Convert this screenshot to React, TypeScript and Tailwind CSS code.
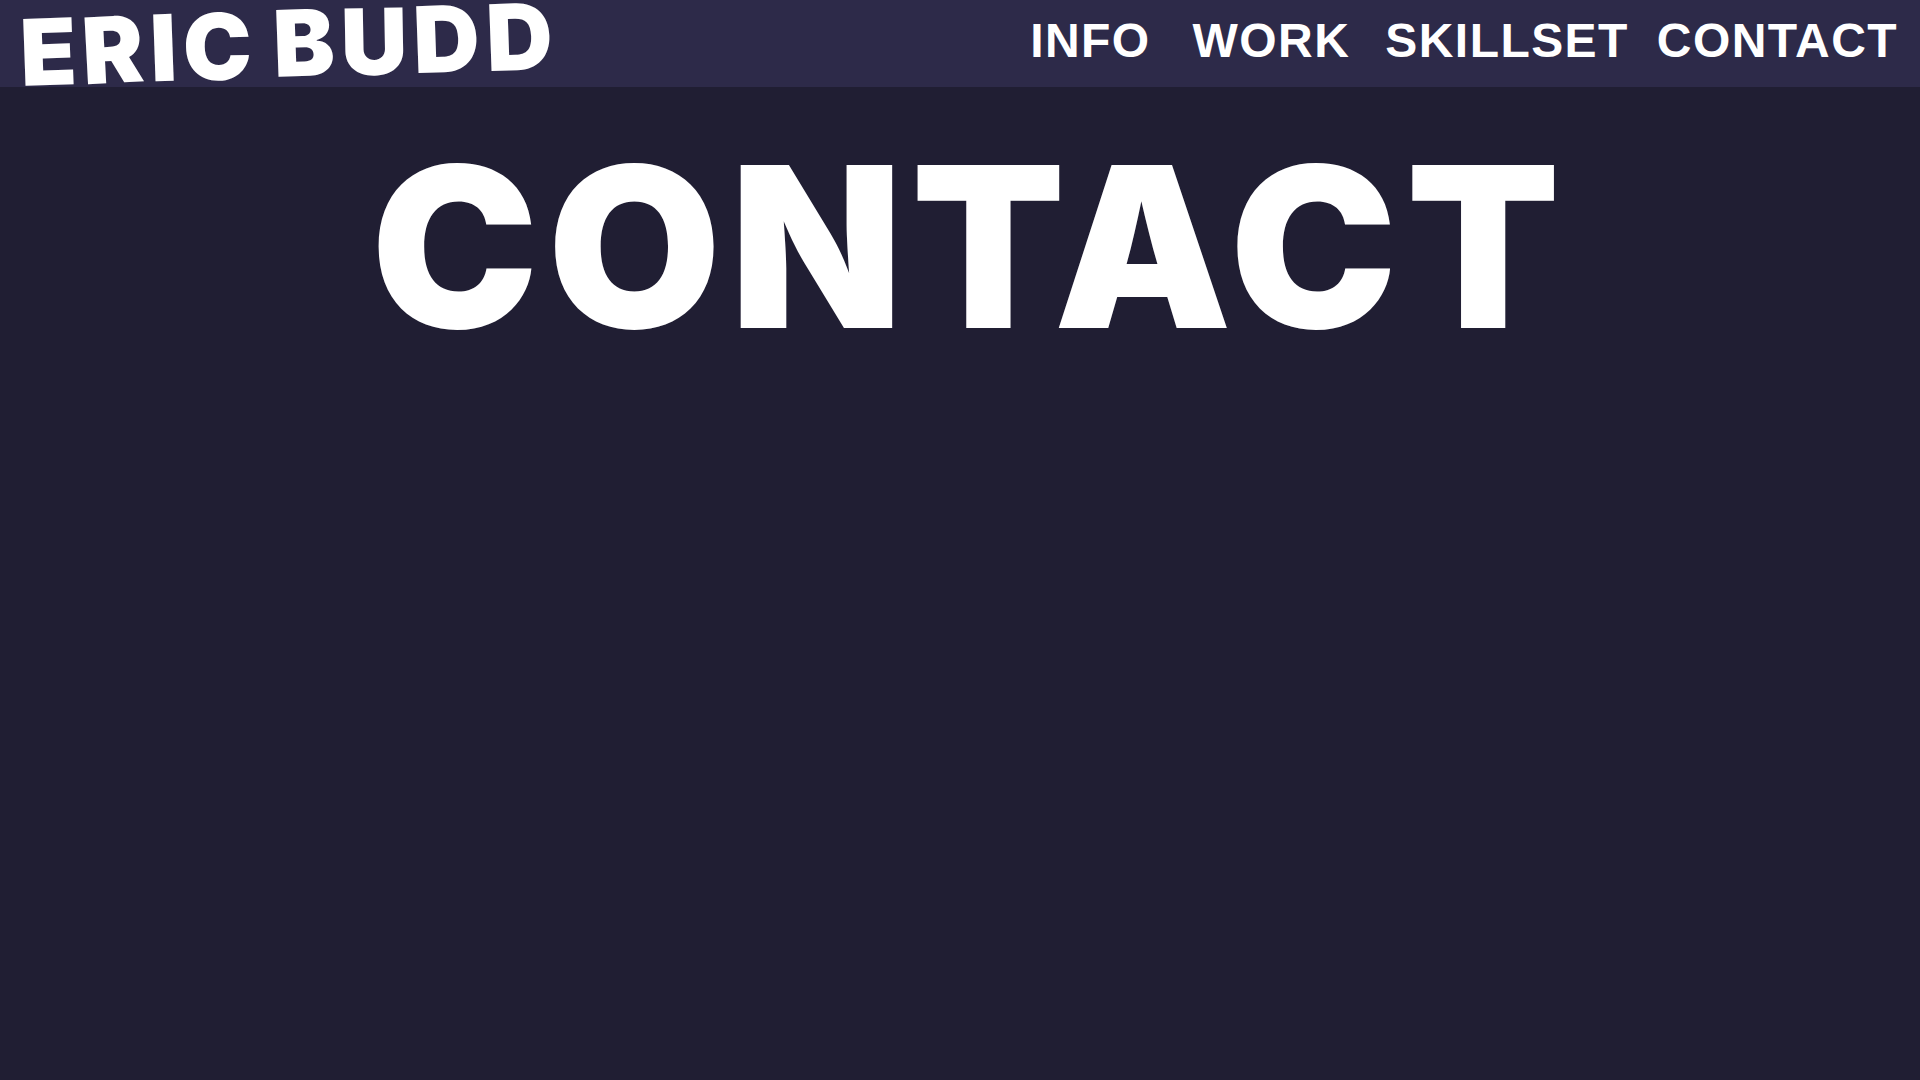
import React from 'react';

const logo = [
  { ch: 'E', cls: 'translate-y-[8px] -rotate-2' },
  { ch: 'R', cls: 'translate-y-[6px] -rotate-3' },
  { ch: 'I', cls: 'translate-y-[4px] -rotate-2' },
  { ch: 'C', cls: 'translate-y-[3px] -rotate-1' },
  { ch: ' ', cls: '' },
  { ch: 'B', cls: '-translate-y-[1px] -rotate-2' },
  { ch: 'U', cls: '-translate-y-[2px] -rotate-1' },
  { ch: 'D', cls: '-translate-y-[5px] -rotate-2' },
  { ch: 'D', cls: '-translate-y-[7px] -rotate-2' },
];

const links = [
  { label: 'INFO', cls: '' },
  { label: 'WORK', cls: 'ml-[42px]' },
  { label: 'SKILLSET', cls: 'ml-[35px]' },
  { label: 'CONTACT', cls: 'ml-[28px]' },
];

export default function App() {
  return (
    <div className="min-h-screen bg-[#201e33] text-white">
      <header className="h-[87px] bg-[#2d2a49] flex items-center justify-between pl-[20px] pr-[22px]">
        <a
          href="#"
          className="flex items-baseline gap-[6px] text-[92px] leading-none font-black"
          style={{ fontFamily: 'Inter, "Noto Sans", sans-serif' }}
        >
          {logo.map((l, i) =>
            l.ch === ' ' ? (
              <span key={i} className="w-[10px]" />
            ) : (
              <span key={i} className={`inline-block ${l.cls}`}>
                {l.ch}
              </span>
            )
          )}
        </a>
        <nav
          className="flex items-center text-[48px] font-bold tracking-[0.03em] -translate-y-[3px]"
          style={{ fontFamily: '"Liberation Sans", Arial, sans-serif' }}
        >
          {links.map(l => (
            <a key={l.label} href="#" className={`leading-none ${l.cls}`}>
              {l.label}
            </a>
          ))}
        </nav>
      </header>

      <main className="flex justify-center pt-[48px]">
        <h1
          className="text-[224px] leading-none font-black tracking-[9px] pl-[20px]"
          style={{ fontFamily: 'Inter, "Noto Sans", sans-serif' }}
        >
          CONTACT
        </h1>
      </main>
    </div>
  );
}
